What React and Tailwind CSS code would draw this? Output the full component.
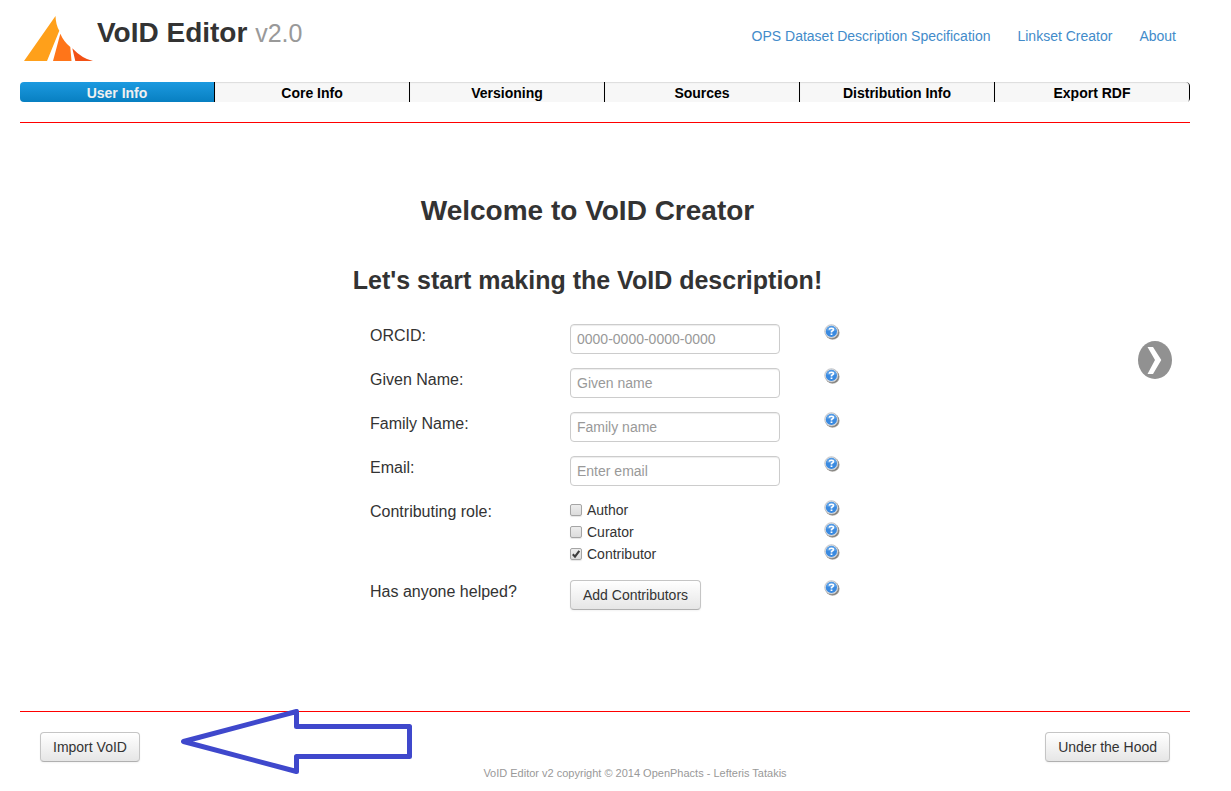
import React from 'react';

const TABS = ['User Info', 'Core Info', 'Versioning', 'Sources', 'Distribution Info', 'Export RDF'];

const FIELDS = [
  { id: 'orcid', label: 'ORCID:', placeholder: '0000-0000-0000-0000', type: 'text' },
  { id: 'given', label: 'Given Name:', placeholder: 'Given name', type: 'text' },
  { id: 'family', label: 'Family Name:', placeholder: 'Family name', type: 'text' },
  { id: 'email', label: 'Email:', placeholder: 'Enter email', type: 'email' },
];

const ROLES = [
  { id: 'author', label: 'Author', checked: false },
  { id: 'curator', label: 'Curator', checked: false },
  { id: 'contributor', label: 'Contributor', checked: true },
];

function Logo() {
  return (
    <svg width="69" height="46" viewBox="0 0 69 46" className="shrink-0" aria-hidden="true">
      <path d="M0 45 L31.5 0 Q31.8 9 35.3 14.7 L23 45 Z" fill="#ffa01a" />
      <path d="M36.3 17.7 L29 45 H47.5 L46.3 31 Q40 26 36.3 17.7 Z" fill="#ff7519" />
      <path d="M48.3 32.2 L51.3 45 H69 Q58 42.5 48.3 32.2 Z" fill="#f25014" />
    </svg>
  );
}

function Help({ topic }) {
  return (
    <button type="button" aria-label={`Help: ${topic}`} className="block h-4 w-[15px]">
      <svg width="16" height="16" viewBox="0 0 16 16" className="max-w-none">
        <circle cx="8.7" cy="8.9" r="6.9" fill="#b5b2ad" />
        <circle cx="8.2" cy="8.3" r="6.9" fill="#6f6c68" opacity="0.75" />
        <circle cx="7.4" cy="7.4" r="6.7" fill="#dfe2e6" stroke="#b3b6ba" strokeWidth="0.7" />
        <circle cx="7.4" cy="7.4" r="5.6" fill="#3a8ae0" />
        <path d="M2.2 6.2 A5.4 5.4 0 0 1 12.6 6.2 Q7.4 8 2.2 6.2 Z" fill="#6aa9ea" opacity="0.7" />
        <path d="M5.2 5.7 Q5.4 4.2 7.4 4.2 Q9.5 4.2 9.5 5.6 Q9.5 6.7 7.5 7.6 V8.5" fill="none" stroke="#fff" strokeWidth="1.6" />
        <rect x="6.6" y="9.5" width="1.8" height="1.5" fill="#fff" />
      </svg>
    </button>
  );
}

function Button({ children }) {
  return (
    <button
      type="button"
      className="h-[30px] rounded-[4px] border border-[#c5c5c5] border-b-[#b0b0b0] bg-linear-to-b from-white to-[#e6e6e6] px-3 text-sm leading-5 whitespace-nowrap text-[#333] shadow-[0_1px_2px_rgba(0,0,0,0.05)]"
    >
      {children}
    </button>
  );
}

function Role({ role }) {
  return (
    <div className="flex h-[22px] justify-between">
      <label htmlFor={role.id} className="flex h-5 items-center gap-[5px] text-sm leading-5">
        <span className="grid h-3 w-3">
          <input
            id={role.id}
            type="checkbox"
            defaultChecked={role.checked}
            className="peer col-start-1 row-start-1 h-3 w-3 appearance-none rounded-[2px] border border-[#a5a5a5] bg-linear-to-b from-[#ededed] to-[#dcdcdc] shadow-[0_1px_1px_rgba(0,0,0,0.1)]"
          />
          <svg
            width="12"
            height="12"
            viewBox="0 0 12 12"
            className="pointer-events-none invisible col-start-1 row-start-1 peer-checked:visible"
          >
            <path d="M2.8 6.2 L5 8.6 L9.3 2.8" fill="none" stroke="#3c3c3c" strokeWidth="2.1" />
          </svg>
        </span>
        {role.label}
      </label>
      <Help topic={role.label} />
    </div>
  );
}

export default function App() {
  return (
    <div className="bg-white pr-[41px] pl-5 font-['Liberation_Sans',Arial,sans-serif] text-[#333]">
      <header className="flex h-[82px] items-start justify-between pr-[14px] pl-1">
        <div className="flex gap-1 pt-4">
          <Logo />
          <h1 className="text-[28px] leading-[34px] font-bold">
            VoID Editor <small className="text-[25px] font-normal text-[#999]">v2.0</small>
          </h1>
        </div>
        <nav className="flex gap-[27px] pt-[26px] text-sm leading-5 text-[#428bca]">
          <a href="#specification">OPS Dataset Description Specification</a>
          <a href="#linkset">Linkset Creator</a>
          <a href="#about">About</a>
        </nav>
      </header>

      <nav className="grid h-5 grid-cols-6 overflow-hidden rounded-[4px]">
        {TABS.map((tab, i) => (
          <a
            key={tab}
            href={`#step-${i + 1}`}
            aria-current={i === 0 ? 'step' : undefined}
            className={
              'border-r border-black pt-px text-center text-sm leading-5 font-bold last:rounded-r-[4px] ' +
              (i === 0
                ? 'bg-linear-to-b from-[#1b9ae0] to-[#067ec0] text-[#f0f0f0] shadow-[inset_0_-1px_0_#0670a8]'
                : 'bg-[#f7f7f7] text-black shadow-[inset_0_1px_1px_#dcdcdc]')
            }
          >
            {tab}
          </a>
        ))}
      </nav>

      <div className="mt-5 flex items-start border-y border-[#f00] pr-[18px]">
        <main className="flex-1 pt-[68px] pb-[101px]">
          <div className="pl-[17px] text-center font-bold">
            <h2 className="text-[28px] leading-10">Welcome to VoID Creator</h2>
            <h3 className="mt-[29px] text-[25px] leading-10">Let's start making the VoID description!</h3>
          </div>
          <form className="flex flex-col pt-6 pl-[51px]">
            <div className="mx-auto grid w-[469px] grid-cols-[200px_254px_15px] gap-y-[14px]">
              {FIELDS.map((f) => (
                <React.Fragment key={f.id}>
                  <label htmlFor={f.id} className="text-base leading-6">
                    {f.label}
                  </label>
                  <input
                    id={f.id}
                    type={f.type}
                    placeholder={f.placeholder}
                    className="h-[30px] w-[210px] rounded-[4px] border border-[#ccc] px-[6px] text-sm leading-5 shadow-[inset_0_1px_1px_rgba(0,0,0,0.075)] placeholder:text-[#999]"
                  />
                  <Help topic={f.label} />
                </React.Fragment>
              ))}
              <span id="role-label" className="text-base leading-6">
                Contributing role:
              </span>
              <div role="group" aria-labelledby="role-label" className="col-span-2">
                {ROLES.map((r) => (
                  <Role key={r.id} role={r} />
                ))}
              </div>
              <span className="text-base leading-6">Has anyone helped?</span>
              <div>
                <Button>Add Contributors</Button>
              </div>
              <Help topic="Contributors" />
            </div>
          </form>
        </main>
        <button type="button" aria-label="Next" className="mt-[218px]">
          <svg width="34" height="38" viewBox="0 0 34 38">
            <ellipse cx="17" cy="19" rx="17" ry="19" fill="#919191" />
            <path d="M9.5 6 H15 L23.3 19 L15 33 H9.5 L17 19 Z" fill="#fff" />
          </svg>
        </button>
      </div>

      <footer className="relative px-5 pt-5">
        <div className="flex justify-between">
          <Button>Import VoID</Button>
          <Button>Under the Hood</Button>
        </div>
        <p className="pt-[3px] pl-[60px] text-center text-[11px] leading-4 text-[#999]">
          VoID Editor v2 copyright © 2014 OpenPhacts - Lefteris Tatakis
        </p>
        <svg
          width="234"
          height="66"
          viewBox="0 0 234 66"
          className="pointer-events-none absolute -top-[3px] left-40"
          aria-hidden="true"
        >
          <path
            d="M3.5 32.5 L116.5 2.5 V17.5 H229.5 V47.5 H116.5 V62.5 Z"
            fill="none"
            stroke="#3f48cc"
            strokeWidth="5"
            strokeLinejoin="round"
          />
        </svg>
      </footer>
    </div>
  );
}
